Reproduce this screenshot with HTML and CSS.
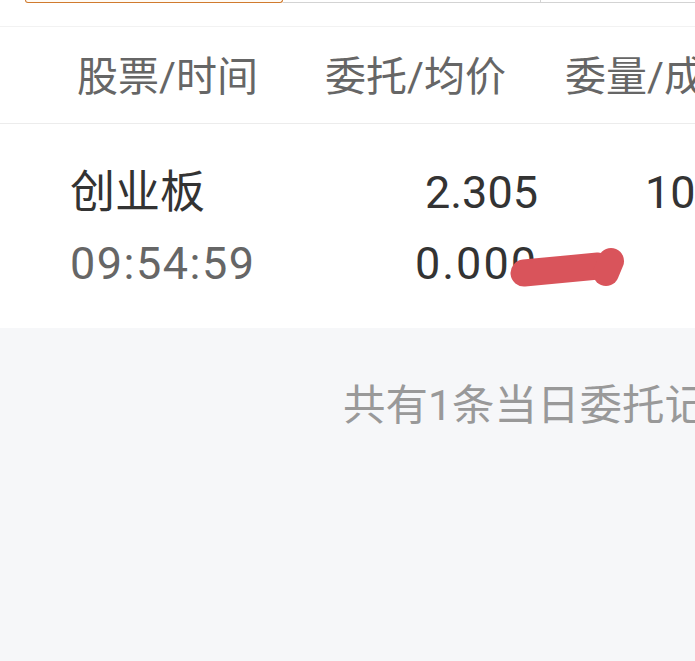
FILE: index.html
```html
<!DOCTYPE html>
<html lang="zh-CN">
<head>
  <meta charset="UTF-8" />
  <meta name="viewport" content="width=device-width, initial-scale=1.0" />
  <title>当日委托</title>
  <link rel="stylesheet" href="styles.css">
</head>
<body>
  <div class="page">
    <div class="tabs">
      <div class="tab active"></div>
      <div class="tab"></div>
      <div class="tab"></div>
    </div>

    <div class="table-head">
      <div class="col col-name">股票/时间</div>
      <div class="col">委托/均价</div>
      <div class="col">委量/成交</div>
    </div>

    <div class="order-row">
      <div class="cell cell-name">
        <span class="main">创业板</span>
        <span class="sub time">09:54:59</span>
      </div>
      <div class="cell cell-price">
        <span class="main">2.305</span>
        <span class="main avg">0.000</span>
      </div>
      <div class="cell cell-qty">
        <span class="main">100</span>
        <span class="main">&nbsp;</span>
      </div>

      <svg class="scribble" width="140" height="60" viewBox="0 0 140 60">
        <path d="M16 36 L90 29" stroke="#d9545b" stroke-width="27" stroke-linecap="round" fill="none" />
        <path d="M103 24 L98 36" stroke="#d9545b" stroke-width="26" stroke-linecap="round" fill="none" />
      </svg>
    </div>

    <div class="summary">
      <p>共有1条当日委托记录</p>
    </div>
  </div>
</body>
</html>
```

FILE: styles.css
```css
:root {
  --accent: #d07a2e;
  --line: #ececec;
  --text-dark: #333;
  --text-mid: #666;
  --text-light: #999;
  --page-bg: #f6f7f9;
}

* {
  box-sizing: border-box;
  margin: 0;
  padding: 0;
}

html, body {
  height: 100%;
  overflow: hidden;
}

body {
  background: var(--page-bg);
  font-family: 'Roboto', 'Noto Sans CJK SC', sans-serif;
}

.page {
  width: 100%;
  min-height: 100%;
  background: var(--page-bg);
}

/* segmented tabs, cut off at the top */
.tabs {
  display: flex;
  height: 27px;
  background: #fff;
  border-bottom: 1px solid #f2f2f2;
  align-items: flex-start;
}

.tab {
  height: 3px;
  width: 258px;
  flex-shrink: 0;
  border-bottom: 1px solid #d3d3d3;
  border-right: 1px solid #d3d3d3;
}

.tab:last-child {
  flex: 1;
  border-right: none;
}

.tab.active {
  margin-left: 25px;
  border: 1.5px solid var(--accent);
  border-top: none;
  border-radius: 0 0 5px 5px;
  background: #fffbf5;
}

.table-head {
  display: grid;
  grid-template-columns: 325px 240px 1fr;
  height: 97px;
  padding-bottom: 4px;
  align-items: center;
  background: #fff;
  border-bottom: 1px solid var(--line);
  font-size: 41px;
  color: var(--text-mid);
  white-space: nowrap;
  overflow: hidden;
}

.col-name {
  padding-left: 77px;
}

.order-row {
  position: relative;
  display: grid;
  grid-template-columns: 325px 240px 1fr;
  height: 204px;
  background: #fff;
  white-space: nowrap;
  overflow: hidden;
}

.cell {
  display: flex;
  flex-direction: column;
  justify-content: center;
  gap: 21px;
  padding-top: 4px;
}

.cell .main {
  font-size: 45px;
  line-height: 50px;
  color: var(--text-dark);
}

.cell .sub {
  font-size: 45px;
  line-height: 50px;
  color: var(--text-mid);
}

.time {
  letter-spacing: 1.5px;
}

.avg {
  letter-spacing: 2px;
}

.cell-name {
  padding-left: 70px;
}

.cell-price {
  align-items: flex-end;
  padding-right: 27px;
}

.cell-qty {
  padding-left: 80px;
}

.scribble {
  position: absolute;
  left: 508px;
  top: 113px;
}

.summary {
  padding-top: 51px;
  padding-left: 343px;
  white-space: nowrap;
  overflow: hidden;
}

.summary p {
  font-size: 42.5px;
  line-height: 54px;
  color: var(--text-light);
}
```
